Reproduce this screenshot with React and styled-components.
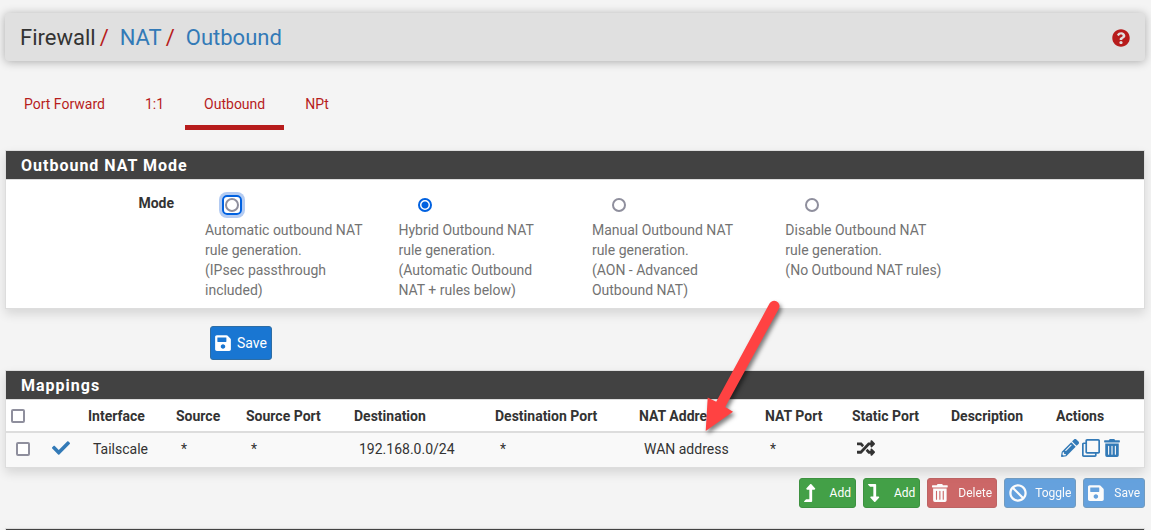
import React, {useState} from 'react';
import styled, {createGlobalStyle} from 'styled-components';
import {
    FaBan,
    FaCheck,
    FaLevelDownAlt,
    FaLevelUpAlt,
    FaPencilAlt,
    FaQuestionCircle,
    FaRandom,
    FaRegClone,
    FaSave,
    FaTrashAlt
} from 'react-icons/fa';

//DATA
const tabs = ['Port Forward', '1:1', 'Outbound', 'NPt'];

const modes = [
    {id: 'automatic', title: 'Automatic outbound NAT rule generation.', note: '(IPsec passthrough included)'},
    {id: 'hybrid', title: 'Hybrid Outbound NAT rule generation.', note: '(Automatic Outbound NAT + rules below)'},
    {id: 'advanced', title: 'Manual Outbound NAT rule generation.', note: '(AON - Advanced Outbound NAT)'},
    {id: 'disabled', title: 'Disable Outbound NAT rule generation.', note: '(No Outbound NAT rules)'}
];

const columns = [
    {name: 'Interface', width: 88},
    {name: 'Source', width: 70},
    {name: 'Source Port', width: 108},
    {name: 'Destination', width: 141},
    {name: 'Destination Port', width: 144},
    {name: 'NAT Address', width: 126},
    {name: 'NAT Port', width: 87},
    {name: 'Static Port', width: 99},
    {name: 'Description', width: 105},
    {name: 'Actions', width: 93}
];

const mappings = [
    {
        id: 0,
        iface: 'Tailscale',
        source: '*',
        sourcePort: '*',
        destination: '192.168.0.0/24',
        destinationPort: '*',
        natAddress: 'WAN address',
        natPort: '*',
        description: ''
    }
];

const App = () => {
    //STATE
    const [mode, setMode] = useState('hybrid');

    return (
        <>
        <GlobalStyle />
        <Page>
            <Header>
                <Breadcrumb>
                    <span>Firewall</span>
                    <Slash>/</Slash>
                    <a href="#nat">NAT</a>
                    <Slash>/</Slash>
                    <a href="#outbound">Outbound</a>
                </Breadcrumb>
                <Help href="#help" aria-label="Help"><FaQuestionCircle /></Help>
            </Header>

            <Tabs>
                {tabs.map( tab => (
                    <Tab href="#tab" key={tab} $active={tab === 'Outbound'}>{tab}</Tab>
                ))}
            </Tabs>

            <Panel>
                <PanelTitle>Outbound NAT Mode</PanelTitle>
                <ModeRow role="radiogroup" aria-labelledby="mode-label">
                    <ModeLabel id="mode-label">Mode</ModeLabel>
                    {modes.map( item => (
                        <ModeOption key={item.id}>
                            <Radio
                                type="radio"
                                name="mode"
                                checked={mode === item.id}
                                onChange={() => setMode(item.id)}
                                $ring={item.id === 'automatic'}
                            />
                            <span>{item.title}</span>
                            <span>{item.note}</span>
                        </ModeOption>
                    ))}
                </ModeRow>
            </Panel>

            <SaveRow>
                <SaveButton type="button"><FaSave />Save</SaveButton>
            </SaveRow>

            <Panel>
                <PanelTitle>Mappings</PanelTitle>
                <Table>
                    <colgroup>
                        <Col $width={36} />
                        <Col $width={41} />
                        {columns.map( column => (
                            <Col key={column.name} $width={column.width} />
                        ))}
                    </colgroup>
                    <thead>
                        <tr>
                            <HeadCell><Checkbox type="checkbox" aria-label="Select all" /></HeadCell>
                            <HeadCell />
                            {columns.map( column => (
                                <HeadCell key={column.name}>{column.name}</HeadCell>
                            ))}
                        </tr>
                    </thead>
                    <tbody>
                        {mappings.map( rule => (
                            <tr key={rule.id}>
                                <Cell><Checkbox type="checkbox" aria-label="Select rule" /></Cell>
                                <IconCell>
                                    <IconLink href="#toggle" aria-label="Toggle rule"><FaCheck /></IconLink>
                                </IconCell>
                                <Cell>{rule.iface}</Cell>
                                <Cell>{rule.source}</Cell>
                                <Cell>{rule.sourcePort}</Cell>
                                <Cell>{rule.destination}</Cell>
                                <Cell>{rule.destinationPort}</Cell>
                                <Cell>{rule.natAddress}</Cell>
                                <Cell>{rule.natPort}</Cell>
                                <IconCell><FaRandom /></IconCell>
                                <Cell>{rule.description}</Cell>
                                <IconCell>
                                    <IconGroup>
                                        <IconLink href="#edit" aria-label="Edit"><FaPencilAlt /></IconLink>
                                        <IconLink href="#copy" aria-label="Copy"><FaRegClone /></IconLink>
                                        <IconLink href="#delete" aria-label="Delete"><FaTrashAlt /></IconLink>
                                    </IconGroup>
                                </IconCell>
                            </tr>
                        ))}
                    </tbody>
                </Table>
            </Panel>

            <Toolbar>
                <ActionButton type="button" $color="#43a047" $border="#3d9140">
                    <ActionIcon><FaLevelUpAlt preserveAspectRatio="xMinYMid" /></ActionIcon>Add
                </ActionButton>
                <ActionButton type="button" $color="#43a047" $border="#3d9140">
                    <ActionIcon><FaLevelDownAlt preserveAspectRatio="xMinYMid" /></ActionIcon>Add
                </ActionButton>
                <ActionButton type="button" $color="#b71c1c" $border="#a01818" disabled>
                    <ActionIcon><FaTrashAlt preserveAspectRatio="xMinYMid" /></ActionIcon>Delete
                </ActionButton>
                <ActionButton type="button" $color="#1976d2" $border="#2e6da4" disabled>
                    <ActionIcon><FaBan preserveAspectRatio="xMinYMid" /></ActionIcon>Toggle
                </ActionButton>
                <ActionButton type="button" $color="#1976d2" $border="#2e6da4" disabled>
                    <ActionIcon><FaSave preserveAspectRatio="xMinYMid" /></ActionIcon>Save
                </ActionButton>
            </Toolbar>

            <Panel>
                <PanelTitle />
            </Panel>

            {/* Arrow pointing at the NAT address */}
            <Pointer viewBox="0 0 90 140" aria-hidden="true">
                <path d="M69.5 3.5 A5.3 5.3 0 0 1 78.8 8.8 L25.2 107 L33 111.7 L5.7 131 L7.7 97.5 L16.2 101.7 Z" />
            </Pointer>
        </Page>
        </>
    );
}

const GlobalStyle = createGlobalStyle`
    *{
        box-sizing: border-box;
    }
    body{
        margin: 0;
        background: #f4f4f4;
        color: #333;
        font-family: Roboto, "Liberation Sans", sans-serif;
        font-size: 14px;
        line-height: 20px;
    }
    a{
        color: #337ab7;
        text-decoration: none;
    }
`;

const Page = styled.div`
    position: relative;
    height: 100vh;
    overflow: hidden;
    padding: 13px 6px 0px 5px;
`;

const Header = styled.header`
    display: flex;
    align-items: center;
    justify-content: space-between;
    height: 48px;
    padding: 2px 15px 0px;
    background: #e0e0e0;
    border-radius: 4px;
    box-shadow: 0 1px 10px rgba(0, 0, 0, 0.3);
`;

const Breadcrumb = styled.nav`
    display: flex;
    font-size: 22px;
    line-height: 24px;
`;

const Slash = styled.span`
    margin: 0px 11px 0px 4px;
    color: #b71c1c;
`;

const Help = styled.a`
    display: flex;
    font-size: 18px;
    color: #b71c1c;
`;

const Tabs = styled.nav`
    display: flex;
    gap: 2px;
    margin: 23px 0px 20px;
`;

const Tab = styled.a`
    padding: 10px 19px 11px;
    border-bottom: 5px solid ${props => props.$active ? '#b71c1c' : 'transparent'};
    color: #b71c1c;
`;

const Panel = styled.section`
    background: white;
    border: 1px solid #ddd;
    box-shadow: 0 5px 10px rgba(0, 0, 0, 0.12);
`;

const PanelTitle = styled.h2`
    height: 29px;
    margin: 0;
    padding: 2px 15px 0px;
    background: #424242;
    border-bottom: 1px solid #ddd;
    color: white;
    font-size: 16px;
    font-weight: 700;
    letter-spacing: 1px;
    line-height: 26px;
`;

const ModeRow = styled.div`
    display: grid;
    grid-template-columns: 199px repeat(4, 17%);
    padding: 13px 0px 8px;
`;

const ModeLabel = styled.span`
    padding-right: 31px;
    font-weight: 700;
    text-align: right;
`;

const ModeOption = styled.label`
    display: flex;
    flex-direction: column;
    padding: 5px 34px 0px 0px;
    color: #737373;
`;

const Radio = styled.input`
    appearance: none;
    width: 14px;
    height: 14px;
    margin: 0px 0px 8px 20px;
    border: 2px solid ${props => props.checked ? '#0061e0' : '#8f8f9d'};
    border-radius: 50%;
    background: ${props => props.checked ? 'radial-gradient(#0061e0 3px, white 4px)' : 'white'};
    ${props => props.$ring && `
        position: relative;
        &::after{
            content: '';
            position: absolute;
            inset: -5px;
            border: 2px solid #0061e0;
            border-radius: 5px;
            box-shadow: 0 0 0 3px #b3cbf2;
        }
    `}
`;

const SaveRow = styled.div`
    padding: 17px 205px 10px;
`;

const SaveButton = styled.button`
    display: flex;
    align-items: center;
    gap: 5px;
    height: 34px;
    padding: 0px 4px 0px 3px;
    background: #1976d2;
    border: 1px solid #2e6da4;
    border-radius: 3px;
    color: white;
    font-family: inherit;
    font-size: 14px;
    svg{
        width: 18px;
        height: 18px;
    }
`;

const Table = styled.table`
    width: 100%;
    table-layout: fixed;
    border-collapse: collapse;
`;

const Col = styled.col`
    width: ${props => props.$width}px;
`;

const HeadCell = styled.th`
    height: 32px;
    padding: 0px 5px;
    border-bottom: 2px solid #ddd;
    font-weight: 700;
    text-align: left;
    white-space: nowrap;
`;

const Cell = styled.td`
    height: 35px;
    padding: 0px 0px 2px 10px;
    background: #f9f9f9;
    white-space: nowrap;
`;

const IconCell = styled(Cell)`
    padding-bottom: 4px;
    svg{
        display: block;
        width: 18px;
        height: 18px;
    }
`;

const IconGroup = styled.div`
    display: flex;
    gap: 3px;
`;

const IconLink = styled.a`
    display: block;
`;

const Checkbox = styled.input`
    appearance: none;
    display: block;
    width: 14px;
    height: 14px;
    margin: 0;
    background: white;
    border: 2px solid #8f8f9d;
    border-radius: 2px;
`;

const Toolbar = styled.div`
    display: flex;
    justify-content: flex-end;
    gap: 7px;
    padding: 10px 0px 20px;
`;

const ActionButton = styled.button`
    display: flex;
    align-items: center;
    gap: 8px;
    height: 30px;
    padding: 0px 4px;
    background: ${props => props.$color};
    border: 1px solid ${props => props.$border};
    border-radius: 3px;
    color: white;
    font-family: inherit;
    font-size: 12px;
    &:disabled{
        opacity: 0.65;
    }
`;

const ActionIcon = styled.span`
    display: flex;
    svg{
        width: 18px;
        height: 18px;
    }
`;

const Pointer = styled.svg`
    position: absolute;
    top: 300px;
    left: 700px;
    width: 90px;
    height: 140px;
    fill: #ff4242;
    filter: drop-shadow(2px 3px 2px rgba(0, 0, 0, 0.5));
    pointer-events: none;
`;

export default App;
